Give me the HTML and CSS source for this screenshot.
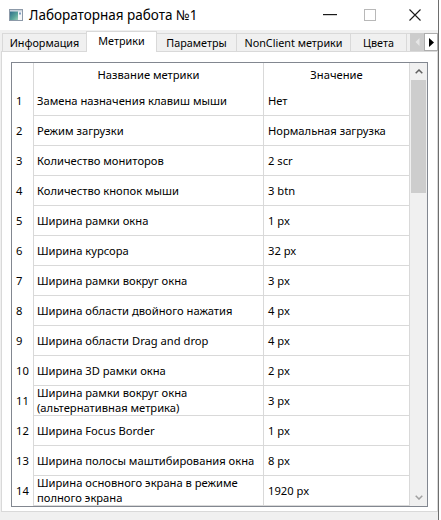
FILE: index.html
```html
<!DOCTYPE html>
<html lang="ru">
<head>
<meta charset="utf-8">
<title>Лабораторная работа №1</title>
<link rel="stylesheet" href="styles.css">
</head>
<body>
<div class="window">
  <div class="titlebar">
    <svg class="app-icon" width="14" height="12" viewBox="0 0 14 12">
      <defs>
        <linearGradient id="ig" x1="0" y1="0" x2="1" y2="1">
          <stop offset="0" stop-color="#2f6d8c"/>
          <stop offset="0.6" stop-color="#5aa59a"/>
          <stop offset="1" stop-color="#9ccfb8"/>
        </linearGradient>
      </defs>
      <rect x="0.5" y="0.5" width="13" height="11" fill="#f4f6f8" stroke="#8c99a8"/>
      <rect x="1" y="1" width="12" height="1.5" fill="#c9d2dc"/>
      <rect x="1" y="2.5" width="8" height="8.5" fill="url(#ig)"/>
      <rect x="10" y="3.5" width="2" height="2" fill="#7f9cc0"/>
    </svg>
    <span class="title">Лабораторная работа №1</span>
    <div class="controls">
      <span class="ctl ctl-min"><svg width="14" height="2" viewBox="0 0 14 2"><rect x="0" y="0" width="14" height="1.2" fill="#1a1a1a"/></svg></span>
      <span class="ctl ctl-max"><svg width="12" height="12" viewBox="0 0 12 12"><rect x="0.5" y="0.5" width="11" height="11" fill="none" stroke="#b8b8b8"/></svg></span>
      <span class="ctl ctl-close"><svg width="12" height="12" viewBox="0 0 12 12"><path d="M0.5 0.5 L11.5 11.5 M11.5 0.5 L0.5 11.5" stroke="#1a1a1a" stroke-width="1.1" fill="none"/></svg></span>
    </div>
  </div>

  <div class="tabstrip">
    <div class="tab t1">Информация</div>
    <div class="tab t2 active">Метрики</div>
    <div class="tab t3">Параметры</div>
    <div class="tab t4">NonClient метрики</div>
    <div class="tab t5">Цвета</div>
    <div class="tab t6"></div>
    <div class="tab-arrows">
      <span class="arr arr-left"><svg width="5" height="8" viewBox="0 0 5 8"><path d="M4.5 0 L0.5 4 L4.5 8 Z" fill="#e6e6e6"/></svg></span>
      <span class="arr arr-right"><svg width="5" height="9" viewBox="0 0 5 9"><path d="M0 0 L5 4.5 L0 9 Z" fill="#000"/></svg></span>
    </div>
  </div>

  <div class="panel">
    <div class="grid">
      <div class="rows">
        <div class="row head">
          <div class="cell rh"></div>
          <div class="cell name">Название метрики</div>
          <div class="cell val">Значение</div>
        </div>
        <div class="row"><div class="cell rh">1</div><div class="cell name">Замена назначения клавиш мыши</div><div class="cell val">Нет</div></div>
        <div class="row"><div class="cell rh">2</div><div class="cell name">Режим загрузки</div><div class="cell val">Нормальная загрузка</div></div>
        <div class="row"><div class="cell rh">3</div><div class="cell name">Количество мониторов</div><div class="cell val">2 scr</div></div>
        <div class="row"><div class="cell rh">4</div><div class="cell name">Количество кнопок мыши</div><div class="cell val">3 btn</div></div>
        <div class="row"><div class="cell rh">5</div><div class="cell name">Ширина рамки окна</div><div class="cell val">1 px</div></div>
        <div class="row"><div class="cell rh">6</div><div class="cell name">Ширина курсора</div><div class="cell val">32 px</div></div>
        <div class="row"><div class="cell rh">7</div><div class="cell name">Ширина рамки вокруг окна</div><div class="cell val">3 px</div></div>
        <div class="row"><div class="cell rh">8</div><div class="cell name">Ширина области двойного нажатия</div><div class="cell val">4 px</div></div>
        <div class="row"><div class="cell rh">9</div><div class="cell name">Ширина области Drag and drop</div><div class="cell val">4 px</div></div>
        <div class="row"><div class="cell rh">10</div><div class="cell name">Ширина 3D рамки окна</div><div class="cell val">2 px</div></div>
        <div class="row"><div class="cell rh">11</div><div class="cell name wrap">Ширина рамки вокруг окна<br>(альтернативная метрика)</div><div class="cell val">3 px</div></div>
        <div class="row"><div class="cell rh">12</div><div class="cell name">Ширина Focus Border</div><div class="cell val">1 px</div></div>
        <div class="row"><div class="cell rh">13</div><div class="cell name">Ширина полосы маштибирования окна</div><div class="cell val">8 px</div></div>
        <div class="row"><div class="cell rh">14</div><div class="cell name wrap">Ширина основного экрана в режиме<br>полного экрана</div><div class="cell val">1920 px</div></div>
      </div>
      <div class="scrollbar">
        <div class="sb-btn"><svg width="8" height="5" viewBox="0 0 8 5"><path d="M0.7 4.3 L4 1 L7.3 4.3" stroke="#606060" stroke-width="1.5" fill="none"/></svg></div>
        <div class="sb-thumb"></div>
        <div class="sb-track"></div>
        <div class="sb-btn"><svg width="8" height="5" viewBox="0 0 8 5"><path d="M0.7 0.7 L4 4 L7.3 0.7" stroke="#a0a0a0" stroke-width="1.5" fill="none"/></svg></div>
      </div>
    </div>
  </div>
</div>
</body>
</html>
```
FILE: styles.css
```css
* {
  box-sizing: border-box;
}

html,
body {
  margin: 0;
  padding: 0;
}

body {
  width: 441px;
  height: 520px;
  overflow: hidden;
  background: #ffffff;
  font-family: "Noto Sans", "Open Sans", sans-serif;
  font-size: 11.2px;
  color: #000000;
}

.window {
  width: 439px;
  height: 520px;
  background: #f0f0f0;
  border-right: 1px solid #6e6e6e;
}

/* Title bar */
.titlebar {
  height: 30px;
  background: #ffffff;
  display: flex;
  align-items: center;
}

.app-icon {
  margin-left: 9px;
  flex: none;
}

.title {
  margin-left: 6px;
  font-size: 13.5px;
  line-height: 20px;
  white-space: nowrap;
}

.controls {
  margin-left: auto;
  display: flex;
  height: 30px;
}

.ctl {
  display: flex;
  align-items: center;
  justify-content: center;
  height: 30px;
}

.ctl-min {
  width: 36px;
}

.ctl-max {
  width: 44px;
}

.ctl-close {
  width: 46px;
}

/* Tabs */
.tabstrip {
  height: 21px;
  display: flex;
  align-items: flex-end;
  padding-left: 2px;
  position: relative;
  z-index: 1;
  font-size: 10.8px;
}

.tab {
  height: 18px;
  border: 1px solid #d9d9d9;
  border-bottom: none;
  margin-right: -1px;
  background: #f0f0f0;
  display: flex;
  align-items: center;
  justify-content: center;
  white-space: nowrap;
  flex: none;
  line-height: 16px;
}

.tab.active {
  height: 21px;
  margin-bottom: -1px;
  background: #ffffff;
  position: relative;
  z-index: 2;
  padding-bottom: 2px;
}

.t1 { width: 85px; }
.t2 { width: 71px; }
.t3 { width: 81px; }
.t4 { width: 115px; }
.t5 { width: 57px; }
.t6 { width: 5px; border-right: none; }

.tab-arrows {
  display: flex;
  height: 18px;
  flex: none;
}

.arr {
  width: 14px;
  height: 18px;
  display: flex;
  align-items: center;
  justify-content: center;
}

.arr-left {
  background: #cccccc;
}

.arr-right {
  background: #ffffff;
  border: 1px solid #adadad;
}

/* Tab page */
.panel {
  margin-left: 1px;
  width: 437px;
  height: 461px;
  background: #ffffff;
  border: 1px solid #d9d9d9;
  padding: 10px 9px 0 9px;
}

.grid {
  width: 417px;
  height: 445px;
  border: 1px solid #828790;
  display: flex;
  overflow: hidden;
}

.rows {
  width: 398px;
  flex: none;
}

.row {
  display: grid;
  grid-template-columns: 22px 230px 146px;
  height: 30px;
}

.row.head {
  height: 23px;
}

.cell {
  border-right: 1px solid #d9d9d9;
  border-bottom: 1px solid #d9d9d9;
  display: flex;
  align-items: center;
  padding-left: 4px;
  white-space: nowrap;
  overflow: hidden;
  line-height: 14px;
}

.cell.name {
  padding-left: 3px;
}

.cell.rh {
  border-bottom: none;
  padding-left: 4px;
}

.head .cell {
  border-bottom: none;
  justify-content: center;
  padding-left: 0;
}

.cell.wrap {
  white-space: normal;
  line-height: 15px;
  padding-bottom: 1px;
}

/* Scrollbar */
.scrollbar {
  width: 17px;
  flex: none;
  background: #f0f0f0;
  display: flex;
  flex-direction: column;
}

.sb-btn {
  height: 17px;
  display: flex;
  align-items: center;
  justify-content: center;
  flex: none;
}

.sb-thumb {
  height: 113px;
  margin: 0 1px;
  background: #cdcdcd;
  flex: none;
}

.sb-track {
  flex: 1;
}
```
